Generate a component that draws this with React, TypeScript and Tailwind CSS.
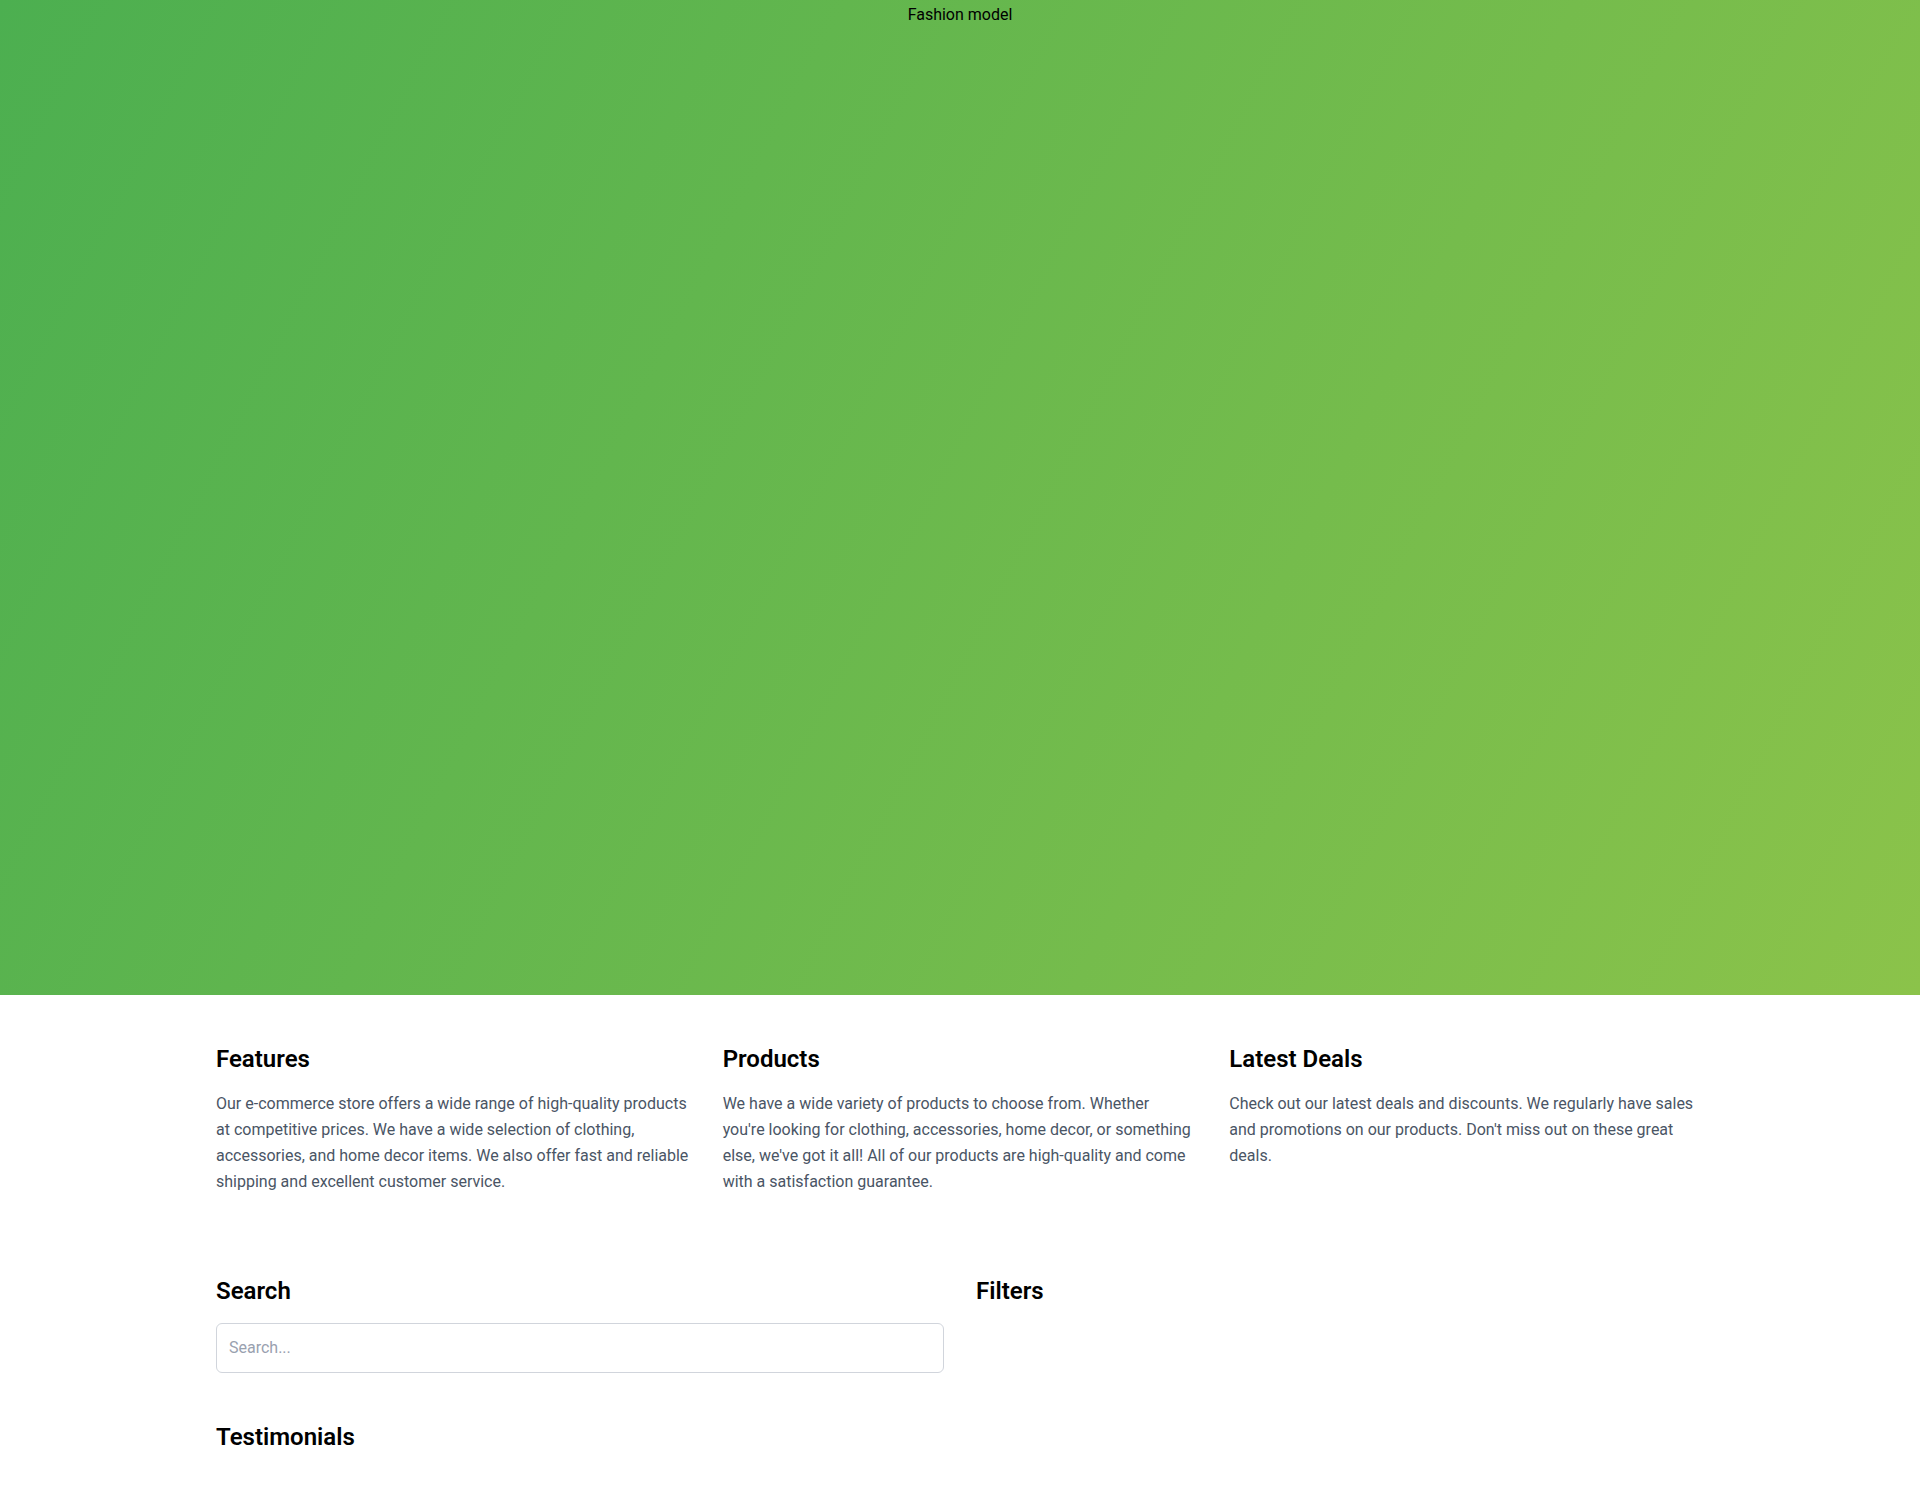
const features = [
  {
    title: "Features",
    lines: [
      "Our e-commerce store offers a wide range of high-quality products at competitive prices. We have a wide selection of clothing, accessories, and home decor items. We also offer fast and reliable shipping and excellent customer service.",
    ],
  },
  {
    title: "Products",
    lines: [
      "We have a wide variety of products to choose from. Whether",
      "you're looking for clothing, accessories, home decor, or something else, we've got it all! All of our products are high-quality and come with a satisfaction guarantee.",
    ],
  },
  {
    title: "Latest Deals",
    lines: [
      "Check out our latest deals and discounts. We regularly have sales and promotions on our products. Don't miss out on these great deals.",
    ],
  },
]

export default function App() {
  return (
    <div className="min-h-screen bg-white font-['Roboto','Noto_Sans',sans-serif] text-black">
      <section className="flex h-[995px] justify-center bg-[linear-gradient(117deg,#4CAF50,#8BC34A)] pt-[3px]">
        <span className="text-base leading-6 text-black">Fashion model</span>
      </section>

      <main className="container mx-auto px-6">
        <div className="grid grid-cols-3 gap-8 py-12">
          {features.map((f) => (
            <div key={f.title}>
              <h2 className="mb-4 text-2xl font-semibold">{f.title}</h2>
              <p className="text-base leading-relaxed text-gray-600">
                {f.lines.map((l, i) => (
                  <span key={i}>
                    {i > 0 && <br />}
                    {l}
                  </span>
                ))}
              </p>
            </div>
          ))}
        </div>

        <div className="mt-8 grid grid-cols-2 gap-8">
          <div>
            <h2 className="mb-4 text-2xl font-semibold">Search</h2>
            <input
              type="text"
              placeholder="Search..."
              className="w-full rounded-md border border-gray-300 px-3 py-3 text-base leading-6 placeholder:text-gray-400 focus:outline-none"
            />
          </div>
          <div>
            <h2 className="mb-4 text-2xl font-semibold">Filters</h2>
          </div>
        </div>

        <div className="mt-12 pb-12">
          <h2 className="text-2xl font-semibold">Testimonials</h2>
        </div>
      </main>
    </div>
  )
}
